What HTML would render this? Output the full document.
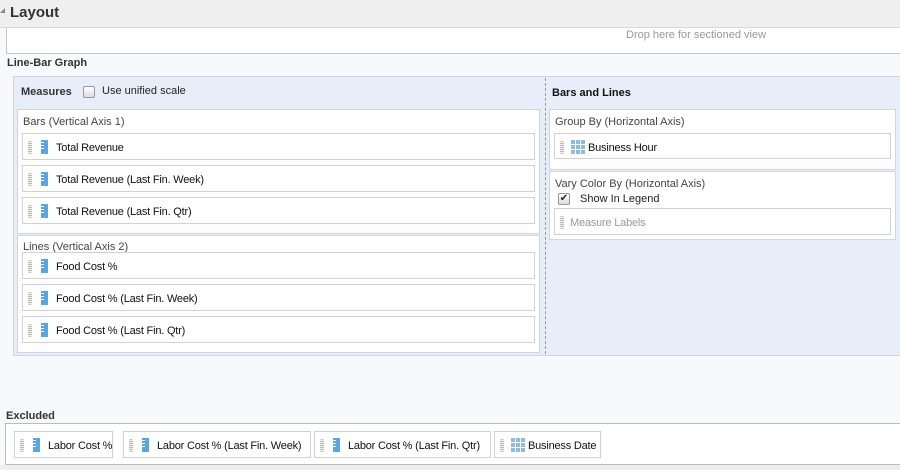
<!DOCTYPE html>
<html><head><style>
*{box-sizing:border-box;margin:0;padding:0}
body{width:900px;height:470px;overflow:hidden;background:#f7f9fd;font-family:"Liberation Sans",sans-serif;font-size:11px;color:#222;position:relative;white-space:nowrap}
.a{position:absolute}
.hdr{left:0;top:0;width:900px;height:28px;background:#efefef;border-bottom:1px solid #d8d8d8}
.hdr b{position:absolute;left:10px;top:4px;font-size:15px;color:#333}
.tri{left:0;top:8px;width:0;height:0;border-left:5px solid transparent;border-bottom:5px solid #888}
.drop{left:6px;top:28px;width:900px;height:26px;background:#fff;border:1px solid #c8c8c8;border-top:none}
.drop span{position:absolute;left:619px;top:1px;color:#999;font-size:11px}
.lbl{font-weight:bold;font-size:11px;color:#333}
.panel{left:13px;top:76px;width:890px;height:280px;background:#e8eef9;border:1px solid #cfd6e2}
.grp{background:#fff;border:1px solid #cfd6e2}
.gt{position:absolute;left:5px;top:6px;color:#444}
.item{position:absolute;background:#fff;border:1px solid #d2d2d2;height:27px}
.item span{position:absolute;left:33px;top:8px;color:#111;letter-spacing:-0.2px}
.grip{position:absolute;left:5px;top:7px;width:4px;height:13px;background:repeating-linear-gradient(#bbb 0 1px,#eee 1px 2px);border-radius:2px}
.ruler{position:absolute;left:18px;top:6px;width:7px;height:14px;background:#5aa6e0}
.ruler:after{content:"";position:absolute;left:0;top:2px;width:3px;height:9px;background:repeating-linear-gradient(#fff 0 1px,transparent 1px 3px)}
.grid{position:absolute;left:16px;top:6px;width:14px;height:14px;background:
linear-gradient(90deg,transparent 4px,#fff 4px,#fff 5px,transparent 5px,transparent 9px,#fff 9px,#fff 10px,transparent 10px),
linear-gradient(transparent 4px,#fff 4px,#fff 5px,transparent 5px,transparent 9px,#fff 9px,#fff 10px,transparent 10px),#8dbbe2}
.cb{position:absolute;width:12px;height:12px;border:1px solid #999;border-radius:2px;background:linear-gradient(#fff,#ddd)}
</style></head><body>
<div class="a hdr"><b>Layout</b></div>
<div class="a tri"></div>
<div class="a drop"><span>Drop here for sectioned view</span></div>
<div class="a lbl" style="left:7px;top:57px">Line-Bar Graph</div>
<div class="a panel"></div>
<div class="a lbl" style="left:21px;top:86px">Measures</div>
<div class="cb" style="left:83px;top:86px"></div>
<div class="a" style="left:102px;top:85px">Use unified scale</div>
<div class="a" style="left:545px;top:78px;height:276px;border-left:1px dashed #999"></div>
<div class="a lbl" style="left:552px;top:87px;color:#111">Bars and Lines</div>

<div class="a grp" style="left:17px;top:109px;width:523px;height:125px"><span class="gt">Bars (Vertical Axis 1)</span></div>
<div class="item" style="left:22px;top:133px;width:513px"><i class="grip"></i><i class="ruler"></i><span>Total Revenue</span></div>
<div class="item" style="left:22px;top:165px;width:513px"><i class="grip"></i><i class="ruler"></i><span>Total Revenue (Last Fin. Week)</span></div>
<div class="item" style="left:22px;top:197px;width:513px"><i class="grip"></i><i class="ruler"></i><span>Total Revenue (Last Fin. Qtr)</span></div>
<div class="a grp" style="left:17px;top:235px;width:523px;height:118px"><span class="gt" style="top:5px">Lines (Vertical Axis 2)</span></div>
<div class="item" style="left:22px;top:252px;width:513px"><i class="grip"></i><i class="ruler"></i><span>Food Cost %</span></div>
<div class="item" style="left:22px;top:284px;width:513px"><i class="grip"></i><i class="ruler"></i><span>Food Cost % (Last Fin. Week)</span></div>
<div class="item" style="left:22px;top:316px;width:513px"><i class="grip"></i><i class="ruler"></i><span>Food Cost % (Last Fin. Qtr)</span></div>

<div class="a grp" style="left:549px;top:109px;width:347px;height:61px"><span class="gt">Group By (Horizontal Axis)</span></div>
<div class="item" style="left:554px;top:133px;width:337px;height:26px"><i class="grip"></i><i class="grid"></i><span>Business Hour</span></div>
<div class="a grp" style="left:549px;top:171px;width:347px;height:69px"><span class="gt">Vary Color By (Horizontal Axis)</span></div>
<div class="cb" style="left:558px;top:193px;font-size:10px;line-height:10px;text-align:center">✔</div>
<div class="a" style="left:580px;top:193px">Show In Legend</div>
<div class="item" style="left:554px;top:208px;width:337px"><i class="grip"></i><span style="left:15px;color:#999">Measure Labels</span></div>

<div class="a lbl" style="left:6px;top:410px">Excluded</div>
<div class="a" style="left:5px;top:423px;width:900px;height:42px;background:#fff;border:1px solid #bbb"></div>
<div class="a" style="left:0;top:465px;width:900px;height:5px;background:#eee"></div>
<div class="item" style="left:14px;top:431px;width:99px"><i class="grip"></i><i class="ruler"></i><span>Labor Cost %</span></div>
<div class="item" style="left:123px;top:431px;width:188px"><i class="grip"></i><i class="ruler"></i><span>Labor Cost % (Last Fin. Week)</span></div>
<div class="item" style="left:314px;top:431px;width:177px"><i class="grip"></i><i class="ruler"></i><span>Labor Cost % (Last Fin. Qtr)</span></div>
<div class="item" style="left:494px;top:431px;width:107px"><i class="grip"></i><i class="grid"></i><span>Business Date</span></div>
</body></html>
